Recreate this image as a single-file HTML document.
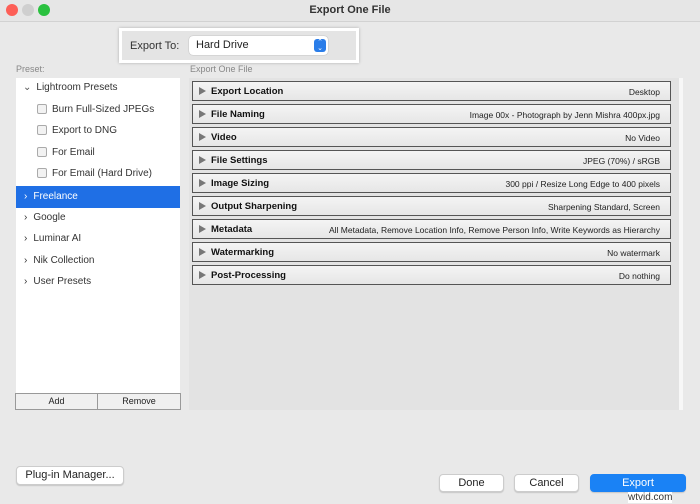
<!DOCTYPE html>
<html><head><style>
*{margin:0;padding:0;box-sizing:border-box}
body{width:700px;height:504px;background:#e9e9e9;font-family:"Liberation Sans",sans-serif;position:relative;overflow:hidden;color:#222}
.a{position:absolute}
.dot{position:absolute;top:4px;width:12px;height:12px;border-radius:50%}
.row{position:absolute;left:192px;width:479px;height:20px;border:1px solid #555;background:linear-gradient(#f4f4f4,#e6e6e6);font-size:9.5px}
.row b{position:absolute;left:18px;top:4px;font-size:9.5px;color:#111}
.row i{position:absolute;left:6px;top:5px;width:0;height:0;border-left:7px solid #777;border-top:4.5px solid transparent;border-bottom:4.5px solid transparent}
.row span{position:absolute;right:10px;top:5px;font-size:8.5px;color:#222}
.item{position:absolute;left:16px;width:164px;height:22px;font-size:10px;color:#333;line-height:22px}
.cb{display:inline-block;width:10px;height:10px;border:1px solid #aaa;border-radius:2px;background:#f2f2f2;vertical-align:middle;margin:0 5px 0 21px}
.btn{position:absolute;background:#fff;border:1px solid #ccc;border-radius:4px;font-size:11px;text-align:center;line-height:17px;box-shadow:0 1px 1px rgba(0,0,0,.15)}
</style></head><body>
<div class="a" style="left:0;top:0;width:700px;height:22px;background:#e6e6e6;border-bottom:1px solid #d2d2d2"></div>
<div class="dot" style="left:6px;background:#fd5f57"></div>
<div class="dot" style="left:22px;background:#cfcfcf"></div>
<div class="dot" style="left:38px;background:#2ac13f"></div>
<div class="a" style="left:0;top:4px;width:700px;text-align:center;font-size:11px;font-weight:bold;color:#333">Export One File</div>
<div class="a" style="left:119px;top:28px;width:240px;height:35px;background:#e4e4e4;border:3px solid #fff;box-shadow:0 0 3px rgba(0,0,0,.25)"></div>
<div class="a" style="left:130px;top:40px;font-size:11px;color:#333">Export To:</div>
<div class="a" style="left:189px;top:36px;width:139px;height:19px;background:#fff;border-radius:4px;box-shadow:0 0 1px rgba(0,0,0,.4);font-size:11px;padding:3px 7px">Hard Drive</div>
<div class="a" style="left:314px;top:39px;width:12px;height:13px;background:#2a7de9;border-radius:3px;color:#fff;font-size:7px;text-align:center;line-height:6px;padding-top:1px">⌃<br>⌄</div>
<div class="a" style="left:16px;top:64px;font-size:9px;color:#888">Preset:</div>
<div class="a" style="left:190px;top:64px;font-size:9px;color:#888">Export One File</div>
<div class="a" style="left:16px;top:78px;width:164px;height:315px;background:#fff"></div>
<div class="item" style="top:77px"><span style="margin:0 5px 0 7px;color:#555">⌄</span>Lightroom Presets</div>
<div class="item" style="top:99px"><span class="cb"></span>Burn Full-Sized JPEGs</div>
<div class="item" style="top:120px"><span class="cb"></span>Export to DNG</div>
<div class="item" style="top:142px"><span class="cb"></span>For Email</div>
<div class="item" style="top:163px"><span class="cb"></span>For Email (Hard Drive)</div>
<div class="item" style="top:186px;background:#1f6fe5;color:#fff"><span style="margin:0 6px 0 8px">›</span>Freelance</div>
<div class="item" style="top:207px"><span style="margin:0 6px 0 8px">›</span>Google</div>
<div class="item" style="top:228px"><span style="margin:0 6px 0 8px">›</span>Luminar AI</div>
<div class="item" style="top:250px"><span style="margin:0 6px 0 8px">›</span>Nik Collection</div>
<div class="item" style="top:271px"><span style="margin:0 6px 0 8px">›</span>User Presets</div>
<div class="a" style="left:15px;top:393px;width:83px;height:17px;border:1px solid #999;background:#f0f0f0;font-size:9px;text-align:center;line-height:15px">Add</div>
<div class="a" style="left:97px;top:393px;width:84px;height:17px;border:1px solid #999;background:#f0f0f0;font-size:9px;text-align:center;line-height:15px">Remove</div>
<div class="a" style="left:189px;top:78px;width:494px;height:332px;background:#e3e3e3;border-right:4px solid #f7f7f7"></div>
<div class="row" style="top:81px"><i></i><b>Export Location</b><span>Desktop</span></div>
<div class="row" style="top:104px"><i></i><b>File Naming</b><span>Image 00x - Photograph by Jenn Mishra 400px.jpg</span></div>
<div class="row" style="top:127px"><i></i><b>Video</b><span>No Video</span></div>
<div class="row" style="top:150px"><i></i><b>File Settings</b><span>JPEG (70%) / sRGB</span></div>
<div class="row" style="top:173px"><i></i><b>Image Sizing</b><span>300 ppi / Resize Long Edge to 400 pixels</span></div>
<div class="row" style="top:196px"><i></i><b>Output Sharpening</b><span>Sharpening Standard, Screen</span></div>
<div class="row" style="top:219px"><i></i><b>Metadata</b><span>All Metadata, Remove Location Info, Remove Person Info, Write Keywords as Hierarchy</span></div>
<div class="row" style="top:242px"><i></i><b>Watermarking</b><span>No watermark</span></div>
<div class="row" style="top:265px"><i></i><b>Post-Processing</b><span>Do nothing</span></div>
<div class="btn" style="left:16px;top:466px;width:108px;height:19px">Plug-in Manager...</div>
<div class="btn" style="left:439px;top:474px;width:65px;height:18px">Done</div>
<div class="btn" style="left:514px;top:474px;width:65px;height:18px">Cancel</div>
<div class="btn" style="left:590px;top:474px;width:96px;height:18px;background:#1a82f5;border-color:#1a82f5;color:#fff">Export</div>
<div class="a" style="left:628px;top:492px;font-size:10px;color:#333;background:#fff">wtvid.com</div>
</body></html>
